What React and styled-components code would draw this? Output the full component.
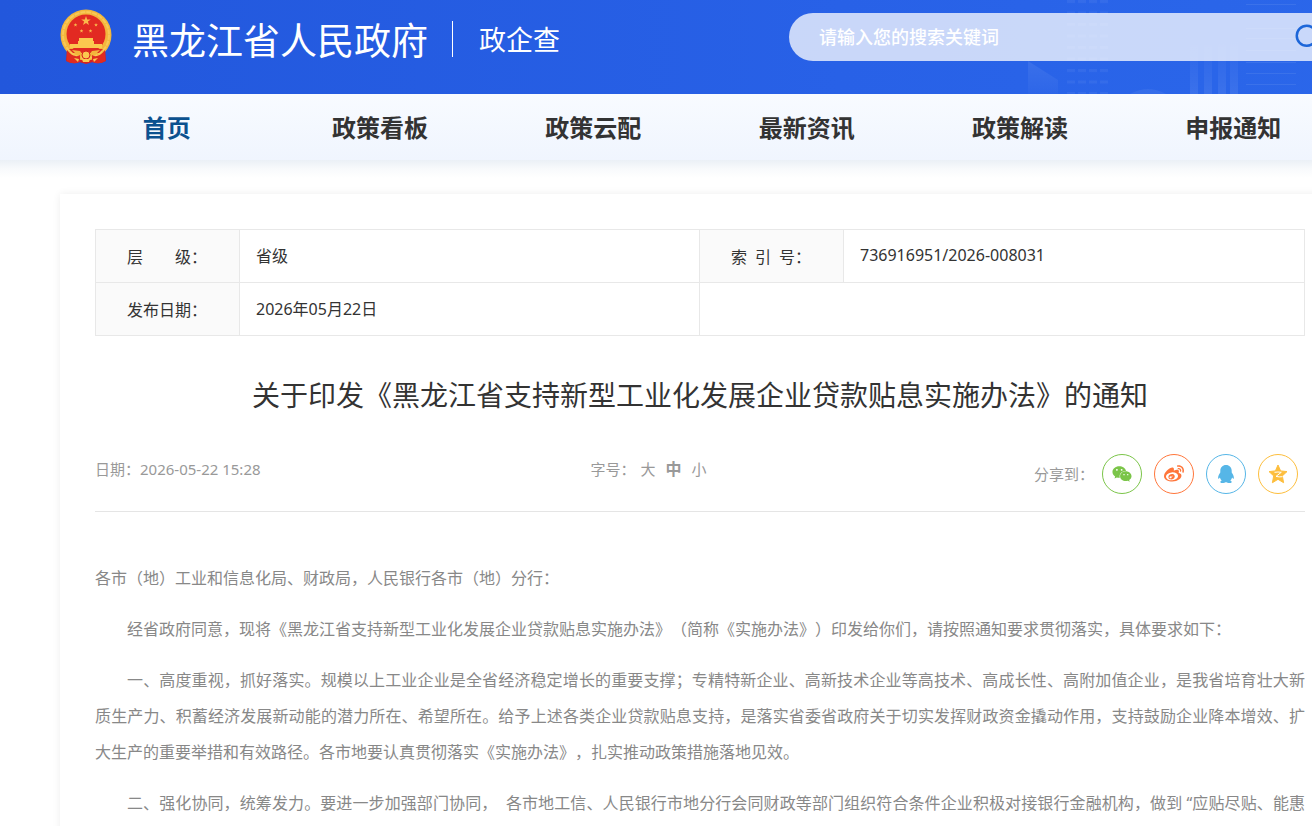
import React from "react";

import styled, { createGlobalStyle } from "styled-components";
import { Search } from "lucide-react";
import { FaWeibo, FaWeixin } from "react-icons/fa";

const GlobalStyle = createGlobalStyle`
  * {
    box-sizing: border-box;
  }
  body {
    margin: 0;
    background: #fff;
    color: #333;
    font-family: "Noto Sans", "Noto Sans CJK SC", sans-serif;
    font-size: 16px;
    text-spacing-trim: space-all;
  }
  a {
    color: inherit;
    text-decoration: none;
  }
`;

const Page = styled.div`
  overflow-x: hidden;
`;

const Container = styled.div`
  min-width: 1280px;
  margin: 0 60px;
`;

const Header = styled.header`
  display: grid;
  min-width: 1400px;
  height: 94px;
  background: linear-gradient(90deg, #2257dc, #2861e7 60%, #2b67ea);
  > * {
    grid-area: 1 / 1;
  }
`;

const Skyline = styled.svg`
  justify-self: end;
  width: 400px;
  height: 94px;
`;

const HeaderInner = styled(Container)`
  display: flex;
  align-items: flex-start;
  justify-content: space-between;
`;

const Brand = styled.div`
  display: flex;
  align-items: center;
  height: 78px;
  color: #fff;
`;

const Emblem = styled.svg`
  width: 52px;
  height: 56px;
  margin-bottom: 4px;
`;

const SiteName = styled.a`
  && {
    color: #fff;
  }
  margin-left: 20px;
  font-family: "Noto Sans CJK SC", sans-serif;
  font-size: 37px;
  line-height: 48px;
`;

const SiteSection = styled.span`
  margin-left: 24px;
  padding-left: 26px;
  border-left: 1px solid #fff;
  font-family: "Noto Sans CJK SC", sans-serif;
  font-size: 27px;
  line-height: 36px;
`;

const SearchForm = styled.form`
  display: flex;
  align-items: center;
  width: 551px;
  height: 48px;
  margin-top: 13px;
  padding: 0 17px 0 30px;
  border-radius: 24px;
  background: rgba(255, 255, 255, 0.75);
`;

const SearchInput = styled.input`
  flex: 1;
  height: 48px;
  padding: 0 0 3px;
  border: 0;
  outline: 0;
  background: none;
  color: #333;
  font-family: "Noto Sans CJK SC", sans-serif;
  font-size: 18px;
  &::placeholder {
    color: #fff;
    font-weight: 500;
    opacity: 1;
  }
`;

const SearchButton = styled.button`
  display: flex;
  padding: 0;
  border: 0;
  background: none;
  color: #1c66d9;
  cursor: pointer;
`;

const Nav = styled.nav`
  min-width: 1400px;
  background: linear-gradient(#f8fbff, #f0f5fe);
`;

const NavShadow = styled.div`
  min-width: 1400px;
  height: 18px;
  background: linear-gradient(#ebf0f6, #f8fafc 50%, #fff);
`;

const NavList = styled(Container)`
  display: grid;
  grid-template-columns: repeat(6, 1fr);
`;

const NavLink = styled.a`
  && {
    color: ${({ $active }) => ($active ? "#0b518f" : "#333")};
  }
  font-family: "Noto Sans CJK SC", sans-serif;
  font-size: 24px;
  font-weight: 700;
  line-height: 66px;
  text-align: center;
`;

const Card = styled(Container)`
  margin-top: 16px;
  padding: 35px;
  background: #fff;
  box-shadow: 0 0 8px rgba(0, 0, 0, 0.07);
`;

const InfoTable = styled.table`
  width: 100%;
  border-collapse: collapse;
  table-layout: fixed;
  th,
  td {
    height: 53px;
    padding: 0 16px 2px;
    border: 1px solid #e8e8e8;
    font-weight: 400;
    text-align: left;
  }
  th {
    padding: 0 0 0 31px;
    background: #fafafa;
    white-space: nowrap;
  }
`;

const LabelCol = styled.col`
  width: 144px;
`;

const ValueCol = styled.col`
  width: 460px;
`;

const Title = styled.h1`
  margin: 38px 0 0;
  font-size: 28px;
  font-weight: 400;
  line-height: 42px;
  text-align: center;
`;

const Meta = styled.div`
  display: grid;
  grid-template-columns: 1fr auto 1fr;
  align-items: center;
  margin-top: 31px;
  padding: 7px 0 17px;
  border-bottom: 1px solid #e5e5e5;
  color: #999;
  font-size: 15px;
  line-height: 30px;
`;

const PublishDate = styled.time`
  margin-bottom: 10px;
`;

const FontSizes = styled.div`
  display: flex;
  align-items: center;
  margin: 0 98px 10px 0;
`;

const FontSizeButton = styled.button`
  margin: 0 5px;
  padding: 0;
  border: 0;
  background: none;
  color: inherit;
  font: inherit;
  font-size: ${({ $active }) => ($active ? 16 : 15)}px;
  font-weight: ${({ $active }) => ($active ? 700 : 400)};
  cursor: pointer;
`;

const Share = styled.div`
  display: flex;
  align-items: center;
  justify-content: flex-end;
  gap: 8px;
  padding-right: 7px;
`;

const ShareLinks = styled.div`
  display: flex;
  gap: 12px;
`;

const ShareLink = styled.a`
  && {
    color: ${({ $color }) => $color};
  }
  display: flex;
  align-items: center;
  justify-content: center;
  width: 40px;
  height: 40px;
  border: 1px solid;
  border-radius: 50%;
`;

const Article = styled.article`
  padding-top: 48px;
  color: #888;
`;

const Paragraph = styled.p`
  margin: 0 0 15px;
  line-height: 36px;
  text-align: justify;
  text-indent: ${({ $indent }) => ($indent ? "2em" : 0)};
`;

const navItems = [
  "首页",
  "政策看板",
  "政策云配",
  "最新资讯",
  "政策解读",
  "申报通知",
];

const paragraphs = [
  "经省政府同意，现将《黑龙江省支持新型工业化发展企业贷款贴息实施办法》（简称《实施办法》）印发给你们，请按照通知要求贯彻落实，具体要求如下：",
  "一、高度重视，抓好落实。规模以上工业企业是全省经济稳定增长的重要支撑；专精特新企业、高新技术企业等高技术、高成长性、高附加值企业，是我省培育壮大新质生产力、积蓄经济发展新动能的潜力所在、希望所在。给予上述各类企业贷款贴息支持，是落实省委省政府关于切实发挥财政资金撬动作用，支持鼓励企业降本增效、扩大生产的重要举措和有效路径。各市地要认真贯彻落实《实施办法》，扎实推动政策措施落地见效。",
  "二、强化协同，统筹发力。要进一步加强部门协同，\u00a0 各市地工信、人民银行市地分行会同财政等部门组织符合条件企业积极对接银行金融机构，做到\u00a0“应贴尽贴、能惠尽惠”。",
];

const starPoints = (cx, cy, r) =>
  Array.from({ length: 10 }, (_, i) => {
    const radius = i % 2 ? r * 0.4 : r;
    const angle = (Math.PI * i) / 5 - Math.PI / 2;
    return `${cx + radius * Math.cos(angle)},${cy + radius * Math.sin(angle)}`;
  }).join(" ");

function NationalEmblem() {
  return (
    <Emblem viewBox="0 0 52 56" aria-hidden="true">
      <path d="M7 38 L6 52 Q13 56 19 53 L26 55 L33 53 Q39 56 46 52 L45 38 Z" fill="#d7221f" />
      <circle cx="26" cy="26" r="25.5" fill="#f3b63c" />
      <circle cx="26" cy="26" r="23" fill="none" stroke="#f8c858" strokeWidth="2" strokeDasharray="5 1" />
      <circle cx="26" cy="25" r="19.5" fill="#e22a22" />
      <polygon points={starPoints(26, 12, 5)} fill="#fbb94b" />
      <polygon points={starPoints(15.5, 16, 2)} fill="#fbb94b" />
      <polygon points={starPoints(36, 16, 2)} fill="#fbb94b" />
      <polygon points={starPoints(21.5, 22, 2)} fill="#fbb94b" />
      <polygon points={starPoints(30.5, 22, 2)} fill="#fbb94b" />
      <path d="M19 29 H33 V32 H34 V35 H42 V39 H10 V35 H18 V32 H19 Z" fill="#fbc94f" />
      <path d="M9 40 H43 L39 44 H13 Z" fill="#df2b21" />
      <path d="M12 41 L20 42 L23 46 L29 46 L32 42 L40 41 L33 48 H19 Z" fill="#f3b63c" />
      <circle cx="26" cy="46" r="4" fill="#fbc94f" stroke="#d7221f" />
      <path d="M7 41 Q14 50 20 46 L20 53 Q13 56 7 52 Z M45 41 Q38 50 32 46 L32 53 Q39 56 45 52 Z" fill="#df2b21" />
      <path d="M14 49 L19 50 L18 53 Z M38 49 L33 50 L34 53 Z M22 50 H30 L29 53 H23 Z" fill="#fbc94f" />
    </Emblem>
  );
}

function SkylineArt() {
  return (
    <Skyline viewBox="0 0 400 94" aria-hidden="true">
      <defs>
        <linearGradient id="tower" x1="0" y1="0" x2="0" y2="1">
          <stop offset="0" stopColor="#fff" stopOpacity="0" />
          <stop offset="1" stopColor="#fff" stopOpacity="0.08" />
        </linearGradient>
        <linearGradient id="slope" x1="0" y1="0" x2="0" y2="1">
          <stop offset="0" stopColor="#fff" stopOpacity="0.08" />
          <stop offset="1" stopColor="#fff" stopOpacity="0.02" />
        </linearGradient>
        <pattern id="windows" width="11" height="11.5" patternUnits="userSpaceOnUse">
          <rect x="1" y="0" width="8" height="3" fill="#fff" fillOpacity="0.05" />
        </pattern>
      </defs>
      <path d="M28 61 L58 80 V94 H28 Z" fill="url(#slope)" />
      <rect x="66" width="42" height="94" fill="url(#windows)" />
      <path d="M130 94 Q148 84 166 94 Z" fill="#fff" fillOpacity="0.06" />
      {[190, 204, 218, 230].map((x) => (
        <rect key={x} x={x} y="40" width="8" height="54" fill="url(#tower)" />
      ))}
      {[4, 28, 38, 50, 62, 73, 84].map((y) => (
        <rect key={y} x="246" y={y} width="50" height="1" fill="#fff" fillOpacity="0.08" />
      ))}
    </Skyline>
  );
}

function QqIcon() {
  return (
    <svg width="20" height="20" viewBox="0 0 20 20" fill="currentColor" aria-hidden="true">
      <path d="M10 1C6.600 1 4.300 3.500 4.300 6.800V8.600C3.200 10.100 2.100 12.200 2.100 14.100C2.100 15.200 2.800 15.100 3.900 13.500C4.200 14.700 4.800 15.700 5.700 16.500C4.500 17 4.100 17.700 4.500 18.400C5 19.300 8.500 19.300 10 18C11.500 19.300 15 19.300 15.500 18.400C15.900 17.700 15.500 17 14.300 16.500C15.200 15.700 15.800 14.700 16.100 13.500C17.200 15.100 17.900 15.200 17.900 14.100C17.900 12.200 16.800 10.100 15.700 8.600V6.800C15.700 3.500 13.400 1 10 1Z" />
    </svg>
  );
}

function QzoneIcon() {
  return (
    <svg width="20" height="20" viewBox="0 0 20 20" aria-hidden="true">
      <path
        d="M10 1L12.600 6.900L19 7.600L14.300 11.900L15.600 18.700L10 15.300L4.400 18.700L5.700 11.900L1 7.600L7.400 6.900Z"
        fill="currentColor"
        stroke="currentColor"
        strokeLinejoin="round"
      />
      <path
        d="M6.500 8.300Q10 7.700 13.300 8.300L8 12.400Q11 13.200 14.600 12.700"
        fill="none"
        stroke="#fff"
        strokeWidth="1"
      />
    </svg>
  );
}

const shareTargets = [
  { name: "微信", color: "#7bc549", icon: <FaWeixin size={20} /> },
  { name: "微博", color: "#ff763b", icon: <FaWeibo size={20} /> },
  { name: "QQ", color: "#56b6e7", icon: <QqIcon /> },
  { name: "QQ空间", color: "#fdbe3d", icon: <QzoneIcon /> },
];

function App() {
  return (
    <Page lang="zh-CN">
      <GlobalStyle />
      <Header>
        <SkylineArt />
        <HeaderInner>
          <Brand>
            <NationalEmblem />
            <SiteName href="#">黑龙江省人民政府</SiteName>
            <SiteSection>政企查</SiteSection>
          </Brand>
          <SearchForm onSubmit={(e) => e.preventDefault()}>
            <SearchInput
              type="text"
              aria-label="搜索"
              placeholder="请输入您的搜索关键词"
            />
            <SearchButton type="submit" aria-label="搜索">
              <Search size={30} />
            </SearchButton>
          </SearchForm>
        </HeaderInner>
      </Header>

      <Nav>
        <NavList>
          {navItems.map((item, i) => (
            <NavLink key={item} href="#" $active={i === 0}>
              {item}
            </NavLink>
          ))}
        </NavList>
      </Nav>
      <NavShadow />

      <Card as="main">
        <InfoTable>
          <colgroup>
            <LabelCol />
            <ValueCol />
            <LabelCol />
            <col />
          </colgroup>
          <tbody>
            <tr>
              <th scope="row">层{"\u3000\u3000"}级：</th>
              <td>省级</td>
              <th scope="row">索{"\u2002"}引{"\u2002"}号：</th>
              <td>736916951/2026-008031</td>
            </tr>
            <tr>
              <th scope="row">发布日期：</th>
              <td>2026年05月22日</td>
              <td colSpan={2} />
            </tr>
          </tbody>
        </InfoTable>

        <Title>
          关于印发《黑龙江省支持新型工业化发展企业贷款贴息实施办法》的通知
        </Title>

        <Meta>
          <PublishDate>日期：2026-05-22 15:28</PublishDate>
          <FontSizes>
            <span>字号：</span>
            {["大", "中", "小"].map((size) => (
              <FontSizeButton key={size} type="button" $active={size === "中"}>
                {size}
              </FontSizeButton>
            ))}
          </FontSizes>
          <Share>
            <span>分享到：</span>
            <ShareLinks>
              {shareTargets.map(({ name, color, icon }) => (
                <ShareLink key={name} href="#" aria-label={name} $color={color}>
                  {icon}
                </ShareLink>
              ))}
            </ShareLinks>
          </Share>
        </Meta>

        <Article>
          <Paragraph>
            各市（地）工业和信息化局、财政局，人民银行各市（地）分行：
          </Paragraph>
          {paragraphs.map((text) => (
            <Paragraph key={text} $indent>
              {text}
            </Paragraph>
          ))}
        </Article>
      </Card>
    </Page>
  );
}

export default App;
